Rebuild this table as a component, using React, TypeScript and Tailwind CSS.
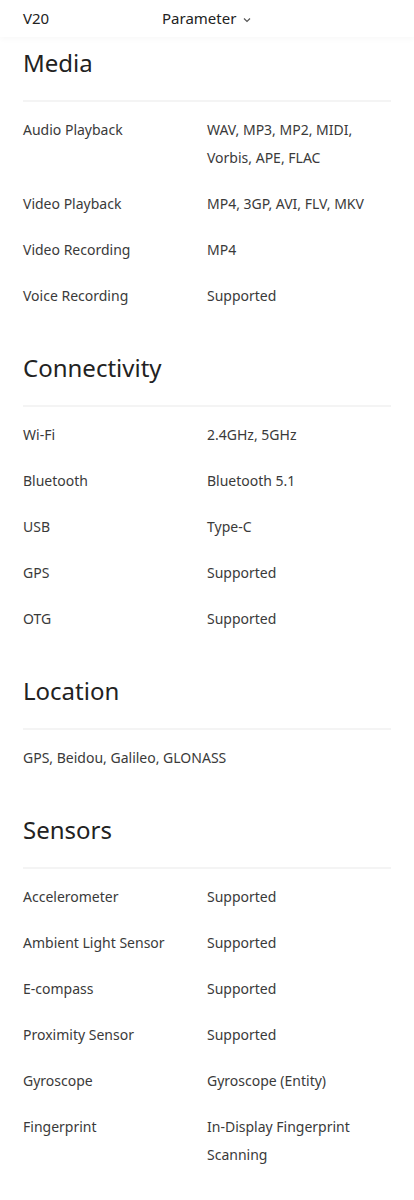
import React from 'react';

interface Spec {
  label?: string;
  value: string[];
}

interface Section {
  title: string;
  rows: Spec[];
}

const sections: Section[] = [
  {
    title: 'Media',
    rows: [
      { label: 'Audio Playback', value: ['WAV, MP3, MP2, MIDI,', 'Vorbis, APE, FLAC'] },
      { label: 'Video Playback', value: ['MP4, 3GP, AVI, FLV, MKV'] },
      { label: 'Video Recording', value: ['MP4'] },
      { label: 'Voice Recording', value: ['Supported'] },
    ],
  },
  {
    title: 'Connectivity',
    rows: [
      { label: 'Wi-Fi', value: ['2.4GHz, 5GHz'] },
      { label: 'Bluetooth', value: ['Bluetooth 5.1'] },
      { label: 'USB', value: ['Type-C'] },
      { label: 'GPS', value: ['Supported'] },
      { label: 'OTG', value: ['Supported'] },
    ],
  },
  {
    title: 'Location',
    rows: [{ value: ['GPS, Beidou, Galileo, GLONASS'] }],
  },
  {
    title: 'Sensors',
    rows: [
      { label: 'Accelerometer', value: ['Supported'] },
      { label: 'Ambient Light Sensor', value: ['Supported'] },
      { label: 'E-compass', value: ['Supported'] },
      { label: 'Proximity Sensor', value: ['Supported'] },
      { label: 'Gyroscope', value: ['Gyroscope (Entity)'] },
      { label: 'Fingerprint', value: ['In-Display Fingerprint', 'Scanning'] },
    ],
  },
];

const App: React.FC = () => {
  return (
    <div className="min-h-[1200px] w-[414px] bg-white text-[#3a3a3a] font-['Noto_Sans',sans-serif]">
      <header className="relative z-10 flex h-[37px] items-center bg-white px-[23px] text-[15px] text-[#222] shadow-[0_2px_6px_rgba(0,0,0,0.03)]">
        <span className="w-[139px]">V20</span>
        <span className="flex items-center gap-[7px]">
          Parameter
          <svg width="8" height="6" viewBox="0 0 8 6" className="mt-[3px]">
            <path d="M1 1.5 L4 4.5 L7 1.5" fill="none" stroke="#555" strokeWidth="1.2" />
          </svg>
        </span>
      </header>

      <main className="px-[23px] pt-[10px]">
        {sections.map((section) => (
          <section key={section.title} className="mb-[42px]">
            <h2 className="text-[24px] leading-8 text-[#222]">{section.title}</h2>
            <div className="mt-[21px] h-[2px] bg-[#f4f4f4]" />
            <div className="mt-[14px] flex flex-col gap-[18px]">
              {section.rows.map((row, i) =>
                row.label ? (
                  <div key={i} className="flex text-[14px] leading-7">
                    <div className="w-[184px] shrink-0">{row.label}</div>
                    <div>
                      {row.value.map((line) => (
                        <div key={line}>{line}</div>
                      ))}
                    </div>
                  </div>
                ) : (
                  <div key={i} className="text-[14px] leading-7">
                    {row.value.join(' ')}
                  </div>
                ),
              )}
            </div>
          </section>
        ))}
      </main>
    </div>
  );
};

export default App;
